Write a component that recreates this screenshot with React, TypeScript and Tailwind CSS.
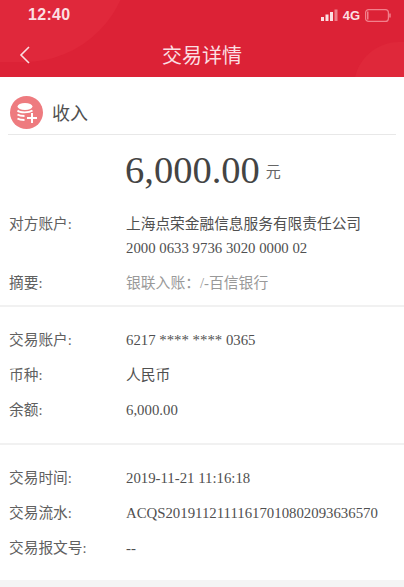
const cjk = "font-['Liberation_Serif','Noto_Sans_CJK_SC',serif]";

function Row({ label, value, valueClass = "text-[#505050]", h = "h-[35px]" }: { label: string; value: string; valueClass?: string; h?: string }) {
  return (
    <div className={`flex items-center ${h}`}>
      <div className="w-[117px] shrink-0 text-[14.7px] text-[#606060]">{label}</div>
      <div className={`text-[14.8px] whitespace-nowrap ${valueClass}`}>{value}</div>
    </div>
  );
}

export default function App() {
  return (
    <div className={`w-[404px] h-[587px] overflow-hidden bg-white flex flex-col ${cjk}`}>
      <header className="relative h-[77px] shrink-0 overflow-hidden bg-[#dc2236] text-[#fbdfe2]">
        <div className="absolute left-[-110px] top-[-150px] w-[240px] h-[212px] rounded-full bg-[#e0283b]" />
        <div className="absolute right-[-60px] top-[42px] w-[110px] h-[90px] rounded-full bg-[#df283a]" />
        <div className="relative flex items-center justify-between h-[30px] pl-[28px] pr-[13px] font-['Liberation_Sans',sans-serif]">
          <span className="text-[16px] font-bold leading-none tracking-[0.3px]">12:40</span>
          <div className="flex items-center gap-[5px]">
            <svg width="17" height="12" viewBox="0 0 17 12" aria-hidden="true">
              <rect x="0" y="8" width="3" height="4" fill="#fbdfe2" />
              <rect x="4.5" y="5.5" width="3" height="6.5" fill="#fbdfe2" />
              <rect x="9" y="3" width="3" height="9" fill="#fbdfe2" />
              <rect x="13.5" y="0.5" width="3" height="11.5" fill="#ee7c88" />
            </svg>
            <span className="text-[13px] font-bold leading-none">4G</span>
            <svg width="26" height="13" viewBox="0 0 26 13" aria-hidden="true">
              <rect x="0.6" y="0.6" width="22.8" height="11.8" rx="3" fill="none" stroke="#f2808c" strokeWidth="1.2" />
              <rect x="2" y="2.5" width="1.5" height="8" fill="#f2808c" />
              <rect x="24.2" y="4.5" width="1.5" height="4" fill="#f2808c" />
            </svg>
          </div>
        </div>
        <div className="relative flex items-center justify-center h-[47px] pt-[3px]">
          <svg className="absolute left-[19px] top-[16px]" width="11" height="18" viewBox="0 0 11 18" aria-hidden="true">
            <path d="M10 1 L2 9 L10 17" fill="none" stroke="#fbdfe2" strokeWidth="1.6" />
          </svg>
          <span className="text-[20px] leading-none font-['Noto_Sans_CJK_SC',sans-serif]">交易详情</span>
        </div>
      </header>

      <div className="mx-[8px] mt-[8px] h-[50px] shrink-0 flex items-end gap-[9px] border-b border-[#e8e8e8] pb-[5px] pl-[2px]">
        <svg width="33" height="33" viewBox="0 0 33 33" aria-hidden="true">
          <circle cx="16.5" cy="16.5" r="16.5" fill="#ee7b7f" />
          <ellipse cx="15" cy="10.5" rx="7.5" ry="3.5" fill="#fff" />
          <path d="M7.5 14.5 C10 17 19 17 22.5 14.5 M7.5 18.5 C9 19.5 12 20 14.5 20 M7.5 22.5 C9 23.5 12 24 14.5 24" fill="none" stroke="#fff" strokeWidth="1.8" />
          <path d="M22 17 V27 M17 22 H27" fill="none" stroke="#fff" strokeWidth="2" />
        </svg>
        <span className="text-[18px] leading-[33px] text-[#505050] font-['Noto_Sans_CJK_SC',sans-serif]">收入</span>
      </div>

      <div className="flex items-center pl-[125px] h-[64px] pt-[10px] pb-[4px] shrink-0">
        <span className="text-[38.5px] leading-[50px] text-[#444]">6,000.00</span>
        <span className="ml-[6px] mt-[4px] text-[15px] text-[#666]">元</span>
      </div>

      <section className="px-[9px] pt-[13px] shrink-0 h-[106px]">
        <div className="flex h-[24px] items-center">
          <div className="w-[117px] shrink-0 text-[14.7px] text-[#606060]">对方账户:</div>
          <div className="text-[14.7px] text-[#505050] whitespace-nowrap">上海点荣金融信息服务有限责任公司</div>
        </div>
        <div className="pl-[117px] h-[24px] flex items-center text-[14.8px] text-[#505050]">2000 0633 9736 3020 0000 02</div>
        <Row label="摘要:" value="银联入账：/-百信银行" valueClass="text-[#999]" h="h-[36px] mt-[5px]" />
      </section>

      <div className="h-[2px] shrink-0 bg-[#f1f1f1]" />

      <section className="px-[9px] pt-[16px] shrink-0 h-[136px]">
        <Row label="交易账户:" value="6217 **** **** 0365" />
        <Row label="币种:" value="人民币" />
        <Row label="余额:" value="6,000.00" />
      </section>

      <div className="h-[2px] shrink-0 bg-[#f1f1f1]" />

      <section className="px-[9px] pt-[16px] shrink-0 h-[135px]">
        <Row label="交易时间:" value="2019-11-21 11:16:18" />
        <Row label="交易流水:" value="ACQS20191121111617010802093636570" />
        <Row label="交易报文号:" value="--" />
      </section>

      <div className="flex-1 bg-[#f4f4f4]" />
    </div>
  );
}
